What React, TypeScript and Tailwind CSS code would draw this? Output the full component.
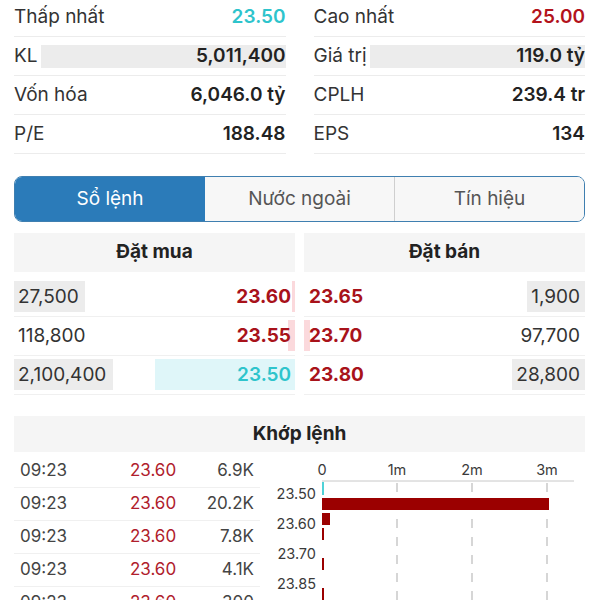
import React from "react";

const stats = [
  [
    { label: "Thấp nhất", value: "23.50", color: "text-[#2ec4cc]", weight: "font-semibold" },
    { label: "Cao nhất", value: "25.00", color: "text-[#b3131c]", weight: "font-semibold" },
  ],
  [
    { label: "KL", value: "5,011,400", bar: true },
    { label: "Giá trị", value: "119.0 tỷ", bar: true },
  ],
  [
    { label: "Vốn hóa", value: "6,046.0 tỷ" },
    { label: "CPLH", value: "239.4 tr" },
  ],
  [
    { label: "P/E", value: "188.48" },
    { label: "EPS", value: "134" },
  ],
];

const buys = [
  { vol: "27,500", volW: "w-[71px]", price: "23.60", red: true, pink: "w-[3px]" },
  { vol: "118,800", volW: "w-0", price: "23.55", red: true, pink: "w-[7px]" },
  { vol: "2,100,400", volW: "w-[99px]", price: "23.50", red: false, pink: "w-0" },
];

const sells = [
  { vol: "1,900", volW: "w-[58px]", price: "23.65", pink: "w-0" },
  { vol: "97,700", volW: "w-0", price: "23.70", pink: "w-[6px]" },
  { vol: "28,800", volW: "w-[73px]", price: "23.80", pink: "w-0" },
];

const trades = [
  ["09:23", "23.60", "6.9K"],
  ["09:23", "23.60", "20.2K"],
  ["09:23", "23.60", "7.8K"],
  ["09:23", "23.60", "4.1K"],
  ["09:23", "23.60", "300"],
];

function StatCell({ item }: { item: any }) {
  return (
    <div className="flex items-center h-[39px] border-b border-[#ececec]">
      <span className="text-[#333] whitespace-nowrap">{item.label}</span>
      {item.bar ? (
        <div className="flex-1 ml-[3px] h-[23px] bg-[#ececec] flex items-center justify-end">
          <span className="font-semibold text-[#222]">{item.value}</span>
        </div>
      ) : (
        <span className={`ml-auto ${item.weight ?? "font-semibold"} ${item.color ?? "text-[#222]"}`}>
          {item.value}
        </span>
      )}
    </div>
  );
}

function MatchChart() {
  const x0 = 52;
  const unit = 75;
  const font = { fontFamily: "Inter, 'Liberation Sans', sans-serif", fontSize: 14.5, fill: "#3a3a3a" };
  return (
    <svg width="315" height="153" viewBox="0 0 315 153">
      {["0", "1m", "2m", "3m"].map((t, i) => (
        <text key={t} x={x0 + i * unit} y="25" textAnchor="middle" style={font}>
          {t}
        </text>
      ))}
      <line x1={x0} y1="31" x2={x0 + 252} y2="31" stroke="#c8c8c8" strokeWidth="1" />
      {[1, 2, 3].map((i) => (
        <line
          key={i}
          x1={x0 + i * unit}
          y1="33"
          x2={x0 + i * unit}
          y2="153"
          stroke="#bbb"
          strokeWidth="1.2"
          strokeDasharray="9 9"
        />
      ))}
      {[
        ["23.50", 44],
        ["23.60", 74],
        ["23.70", 104],
        ["23.85", 134],
      ].map(([t, y]) => (
        <text key={t as string} x="46" y={(y as number) + 5} textAnchor="end" style={font}>
          {t}
        </text>
      ))}
      <rect x={x0} y="32" width="2" height="13" fill="#4fd2d8" />
      <rect x={x0} y="48" width="227" height="12" fill="#9b0000" />
      <rect x={x0} y="63" width="8" height="12" fill="#9b0000" />
      <rect x={x0} y="78" width="2" height="12" fill="#9b0000" />
      <rect x={x0} y="108" width="2" height="12" fill="#9b0000" />
      <rect x={x0} y="138" width="2" height="12" fill="#9b0000" />
    </svg>
  );
}

export default function App() {
  return (
    <div
      className="w-[600px] h-[600px] overflow-hidden bg-white text-[19px]"
      style={{ fontFamily: "Inter, 'Liberation Sans', sans-serif" }}
    >
      <div className="px-[14px] mt-[-2px] grid grid-cols-2 gap-x-[28px] pr-[15px]">
        {stats.map((row, i) => (
          <React.Fragment key={i}>
            <StatCell item={row[0]} />
            <StatCell item={row[1]} />
          </React.Fragment>
        ))}
      </div>

      <div className="mx-[14px] mr-[15px] mt-[22px] h-[46px] flex rounded-[8px] border-[1.5px] border-[#3f7fb0] overflow-hidden text-[#555]">
        <div className="w-[190px] bg-[#2b7bb9] text-white flex items-center justify-center">Sổ lệnh</div>
        <div className="flex-1 bg-[#f7f7f7] flex items-center justify-center border-r border-[#cfcfcf]">
          Nước ngoài
        </div>
        <div className="flex-1 bg-[#f7f7f7] flex items-center justify-center">Tín hiệu</div>
      </div>

      <div className="mx-[14px] mr-[15px] mt-[11px] grid grid-cols-2 gap-x-[9px]">
        <div className="h-[39px] bg-[#f5f5f5] flex items-center justify-center font-bold text-[#222]">Đặt mua</div>
        <div className="h-[39px] bg-[#f5f5f5] flex items-center justify-center font-bold text-[#222]">Đặt bán</div>
        <div className="mt-[6px] flex flex-col">
          {buys.map((b) => (
            <div key={b.vol} className="relative h-[39px] flex items-center border-b border-[#f0f0f0]">
              <div className={`absolute left-0 top-[3px] h-[31px] bg-[#ececec] ${b.volW}`} />
              <div
                className={`absolute right-0 top-[3px] h-[31px] ${b.red ? "bg-[#fbd9dc]" : "bg-[#dff6f9]"} ${
                  b.red ? b.pink : "w-[140px]"
                }`}
              />
              <span className="relative pl-[4px] text-[#333]">{b.vol}</span>
              <span
                className={`relative ml-auto pr-[4px] font-bold ${b.red ? "text-[#a8121a]" : "text-[#2ec4cc] font-semibold"}`}
              >
                {b.price}
              </span>
            </div>
          ))}
        </div>
        <div className="mt-[6px] flex flex-col">
          {sells.map((s) => (
            <div key={s.vol} className="relative h-[39px] flex items-center border-b border-[#f0f0f0]">
              <div className={`absolute left-0 top-[3px] h-[31px] bg-[#fbd9dc] ${s.pink}`} />
              <div className={`absolute right-0 top-[3px] h-[31px] bg-[#ececec] ${s.volW}`} />
              <span className="relative pl-[5px] font-bold text-[#a8121a]">{s.price}</span>
              <span className="relative ml-auto pr-[5px] text-[#333]">{s.vol}</span>
            </div>
          ))}
        </div>
      </div>

      <div className="mx-[14px] mr-[15px] mt-[21px] h-[36px] bg-[#f5f5f5] flex items-center justify-center font-bold text-[#222]">
        Khớp lệnh
      </div>

      <div className="mx-[14px] mr-[15px] mt-[3px] flex items-start">
        <div className="w-[246px] flex flex-col text-[17px]">
          {trades.map((t, i) => (
            <div key={i} className="h-[33px] flex items-center border-b border-[#f0f0f0] px-[6px]">
              <span className="w-[80px] text-[#444]">{t[0]}</span>
              <span className="w-[106px] text-center text-[#b0202c]">{t[1]}</span>
              <span className="flex-1 text-right text-[#444]">{t[2]}</span>
            </div>
          ))}
        </div>
        <div className="ml-[10px] mt-[-5px] flex-1">
          <MatchChart />
        </div>
      </div>
    </div>
  );
}
